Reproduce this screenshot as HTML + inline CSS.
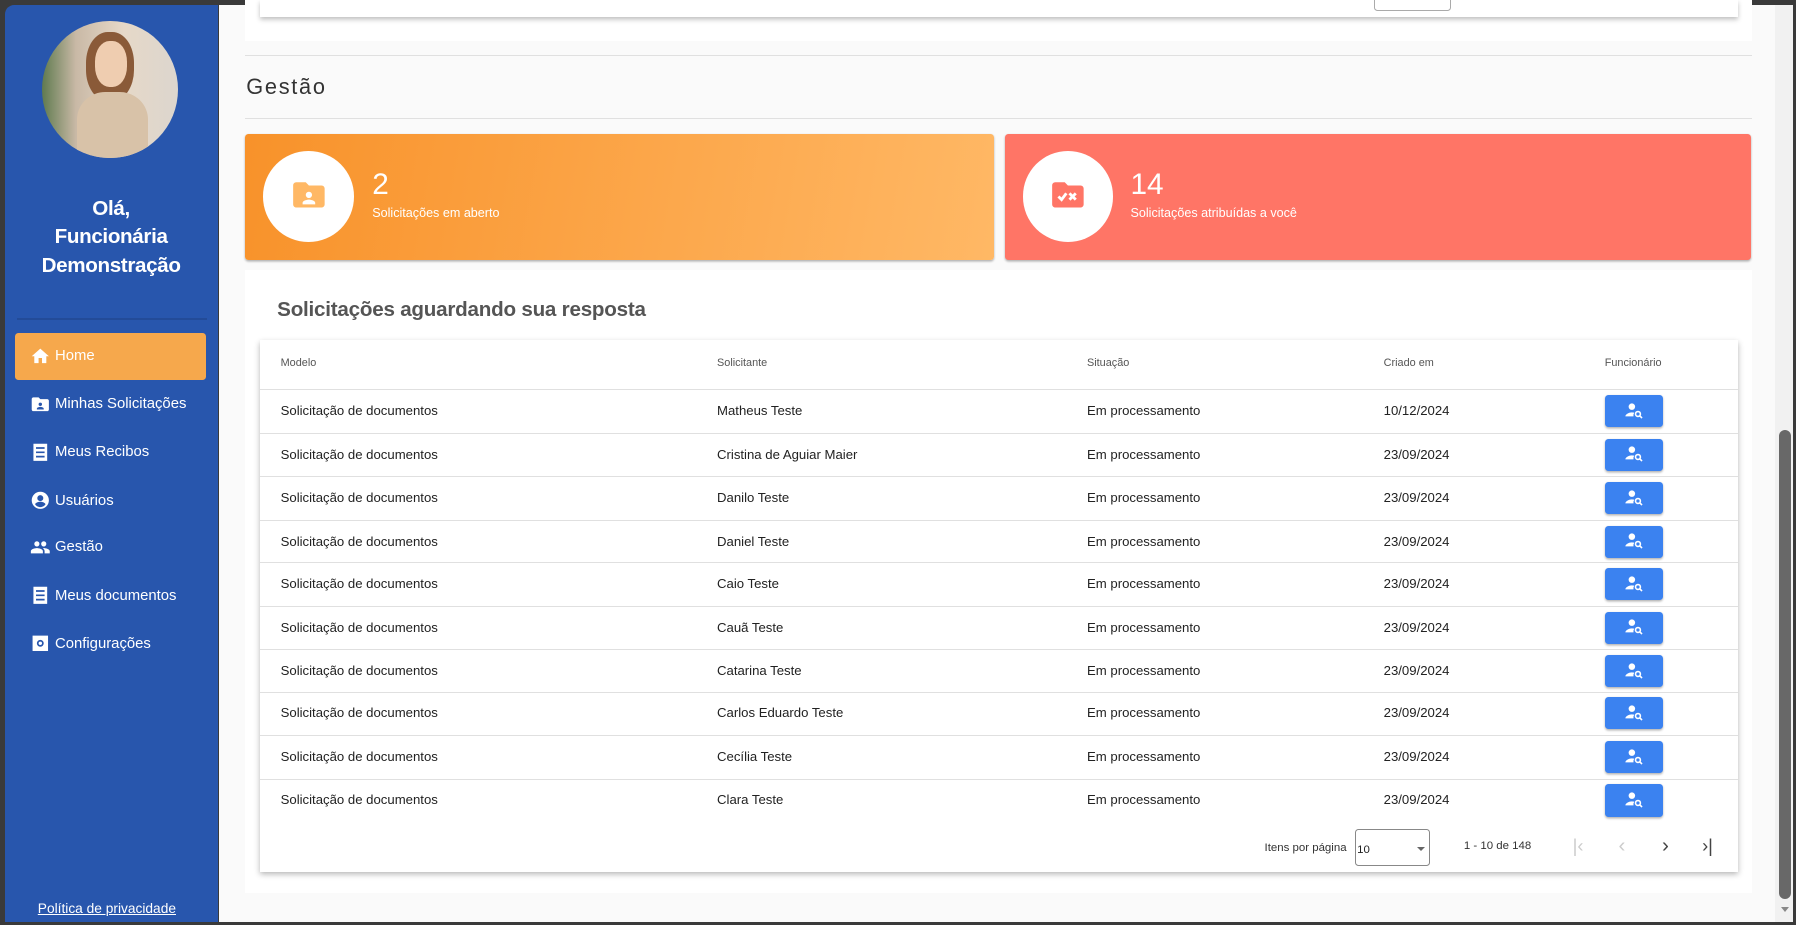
<!DOCTYPE html>
<html><head><meta charset="utf-8"><style>
html,body{margin:0;padding:0}
body{width:1568px;height:808px;zoom:1.14541;background:#3a3a3a;font-family:"Liberation Sans",Arial,sans-serif;position:relative;overflow:hidden}
.abs{position:absolute}
#side{left:4px;top:4px;width:186px;height:801px;background:#2856ad;border-radius:8px 0 0 0}
#main{left:191px;top:4px;width:1359px;height:801px;background:#fafafa}
#sb{left:1550px;top:4px;width:15px;height:801px;background:#f1f1f1}
.menu{position:absolute;left:27px;color:#fff;font-size:13px;display:flex;align-items:center;gap:4px}
.menu svg{width:18px;height:18px}
.hdr{position:absolute;top:312px;font-size:9.5px;color:#555}
.row{position:absolute;left:227px;width:1290px;height:37px;border-top:1px solid #e0e0e0;font-size:11.5px;color:#222}
.row span{position:absolute;top:11px}
.btn{position:absolute;left:1174px;top:4px;width:51px;height:28px;background:#3b82f0;border-radius:3px;box-shadow:0 1px 2px rgba(0,0,0,.3)}
</style></head><body>
<div class="abs" id="side">
  <div class="abs" style="left:33px;top:14px;width:118px;height:120px;border-radius:50%;overflow:hidden;background:linear-gradient(90deg,#5f7a4f 0%,#c9b9a6 25%,#e6d8c8 60%,#dcd6ce 100%)">
    <div class="abs" style="left:38px;top:10px;width:42px;height:60px;border-radius:45%;background:#8a5a38"></div>
    <div class="abs" style="left:46px;top:18px;width:28px;height:40px;border-radius:45%;background:#efcdb0"></div>
    <div class="abs" style="left:30px;top:62px;width:62px;height:60px;border-radius:40% 40% 0 0;background:#d8c2a8"></div>
  </div>
  <div class="abs" style="left:0;width:186px;top:166px;text-align:center;color:#fff;font-weight:bold;font-size:18px;line-height:25px;letter-spacing:-.3px">Olá,<br>Funcionária<br>Demonstração</div>
  <div class="abs" style="left:11px;top:274px;width:166px;height:1px;background:#234b98"></div>
  <div class="abs" style="left:9px;top:287px;width:167px;height:41px;background:#f6a84c;border-radius:3px"></div>
  <div class="menu" style="top:298px;left:22px"><svg viewBox="0 0 24 24"><path fill="#fff" d="M10 20v-6h4v6h5v-8h3L12 3 2 12h3v8z"/></svg>Home</div>
  <div class="menu" style="top:340px;left:22px"><svg viewBox="0 0 24 24"><path fill="#fff" d="M20 6h-8l-2-2H4c-1.1 0-2 .9-2 2v12c0 1.1.9 2 2 2h16c1.1 0 2-.9 2-2V8c0-1.1-.9-2-2-2zm-8 4a2 2 0 110 4 2 2 0 010-4zm4 8H8v-1c0-1.3 2.7-2 4-2s4 .7 4 2z"/></svg>Minhas Solicitações</div>
  <div class="menu" style="top:382px;left:22px"><svg viewBox="0 0 24 24"><path fill="#fff" d="M4 2h16v20H4zM7 6v2h10V6zm0 5v2h10v-2zm0 5v2h10v-2z"/></svg>Meus Recibos</div>
  <div class="menu" style="top:424px;left:22px"><svg viewBox="0 0 24 24"><path fill="#fff" d="M12 2a10 10 0 100 20 10 10 0 000-20zm0 4a3.5 3.5 0 110 7 3.5 3.5 0 010-7zm0 14c-2.5 0-4.7-1.3-6-3.2 0-2 4-3.1 6-3.1s6 1.1 6 3.1c-1.3 1.9-3.5 3.2-6 3.2z"/></svg>Usuários</div>
  <div class="menu" style="top:465px;left:22px"><svg viewBox="0 0 24 24"><path fill="#fff" d="M16 11a3 3 0 100-6 3 3 0 000 6zm-8 0a3 3 0 100-6 3 3 0 000 6zm0 2c-2.3 0-7 1.2-7 3.5V19h14v-2.5C15 14.2 10.3 13 8 13zm8 0c-.3 0-.6 0-1 .1 1.2.8 2 2 2 3.4V19h6v-2.5c0-2.3-4.7-3.5-7-3.5z"/></svg>Gestão</div>
  <div class="menu" style="top:507px;left:22px"><svg viewBox="0 0 24 24"><path fill="#fff" d="M4 2h16v20H4zM7 6v2h10V6zm0 5v2h10v-2zm0 5v2h10v-2z"/></svg>Meus documentos</div>
  <div class="menu" style="top:549px;left:22px"><svg viewBox="0 0 24 24"><path fill="#fff" d="M3 3h18v18H3zm9 5a4 4 0 100 8 4 4 0 000-8zm0 2a2 2 0 110 4 2 2 0 010-4z"/></svg>Configurações</div>
  <div class="abs" style="left:29px;top:783px;color:#fff;font-size:12px;text-decoration:underline">Política de privacidade</div>
</div>
<div class="abs" id="main">
  <div class="abs" style="left:23px;top:-4px;width:1316px;height:36px;background:#fff"></div>
  <div class="abs" style="left:36px;top:-4px;width:1290px;height:15px;background:#fff;box-shadow:0 2px 4px rgba(0,0,0,.25)"></div>
  <div class="abs" style="left:1009px;top:-4px;width:65px;height:9px;border:1px solid #aaa;border-top:0;border-radius:0 0 3px 3px"></div>
  <div class="abs" style="left:23px;top:44px;width:1316px;height:1px;background:#e0e0e0"></div>
  <div class="abs" style="left:24px;top:61px;font-size:19px;color:#333;letter-spacing:1.5px">Gestão</div>
  <div class="abs" style="left:23px;top:99px;width:1316px;height:1px;background:#e0e0e0"></div>
  <div class="abs" style="left:23px;top:113px;width:654px;height:110px;border-radius:3px;background:linear-gradient(100deg,#f8922a,#ffb865);box-shadow:0 1px 2px rgba(0,0,0,.3)">
    <div class="abs" style="left:16px;top:15px;width:79px;height:79px;border-radius:50%;background:#fff"></div>
    <svg class="abs" style="left:39px;top:37px" width="33" height="33" viewBox="0 0 24 24"><path fill="#ffb865" d="M20 6h-8l-2-2H4c-1.1 0-2 .9-2 2v12c0 1.1.9 2 2 2h16c1.1 0 2-.9 2-2V8c0-1.1-.9-2-2-2zm-8 4a2 2 0 110 4 2 2 0 010-4zm4 8H8v-1c0-1.3 2.7-2 4-2s4 .7 4 2z"/></svg>
    <div class="abs" style="left:111px;top:30px;color:#fff;font-size:26px">2</div>
    <div class="abs" style="left:111px;top:63px;color:#fff;font-size:11px">Solicitações em aberto</div>
  </div>
  <div class="abs" style="left:686px;top:113px;width:652px;height:110px;border-radius:3px;background:#ff7566;box-shadow:0 1px 2px rgba(0,0,0,.3)">
    <div class="abs" style="left:16px;top:15px;width:79px;height:79px;border-radius:50%;background:#fff"></div>
    <svg class="abs" style="left:39px;top:37px" width="33" height="33" viewBox="0 0 24 24"><path fill="#ff7566" d="M20 6h-8l-2-2H4c-1.1 0-2 .9-2 2v12c0 1.1.9 2 2 2h16c1.1 0 2-.9 2-2V8c0-1.1-.9-2-2-2z"/><path fill="none" stroke="#fff" stroke-width="1.8" d="M6 13l2 2 3-4M13 11l4 4M17 11l-4 4"/></svg>
    <div class="abs" style="left:110px;top:30px;color:#fff;font-size:26px">14</div>
    <div class="abs" style="left:110px;top:63px;color:#fff;font-size:11px">Solicitações atribuídas a você</div>
  </div>
  <div class="abs" style="left:23px;top:232px;width:1316px;height:544px;background:#fff"></div>
  <div class="abs" style="left:51px;top:256px;font-size:18px;font-weight:bold;color:#555;letter-spacing:-.2px">Solicitações aguardando sua resposta</div>
</div>
<div class="abs" style="left:227px;top:297px;width:1290px;height:464px;background:#fff;box-shadow:0 2px 5px rgba(0,0,0,.3)"></div>
<div class="hdr" style="left:245px">Modelo</div>
<div class="hdr" style="left:626px">Solicitante</div>
<div class="hdr" style="left:949px">Situação</div>
<div class="hdr" style="left:1208px">Criado em</div>
<div class="hdr" style="left:1401px">Funcionário</div>
<div id="rows"></div>
<div class="abs" style="left:1104px;top:735px;font-size:10px;color:#333">Itens por página</div>
<div class="abs" style="left:1183px;top:724px;width:64px;height:30px;border:1px solid #888;border-radius:3px;font-size:10px;color:#222"><span style="position:absolute;left:1px;top:12px">10</span><span style="position:absolute;right:4px;top:15px;border:4px solid transparent;border-top:4px solid #666"></span></div>
<div class="abs" style="left:1278px;top:733px;font-size:10px;color:#333">1 - 10 de 148</div>
<div class="abs" style="left:1373px;top:729px;font-size:16px;color:#ccc">|‹</div>
<div class="abs" style="left:1413px;top:728px;font-size:18px;color:#ccc">‹</div>
<div class="abs" style="left:1451px;top:728px;font-size:18px;color:#444">›</div>
<div class="abs" style="left:1486px;top:729px;font-size:16px;color:#444">›|</div>
<div class="abs" id="sb"></div>
<div class="abs" style="left:1553px;top:375px;width:11px;height:410px;background:#686868;border-radius:6px"></div>
<div class="abs" style="left:1555px;top:792px;border:4px solid transparent;border-top:5px solid #888"></div>
<script>
var names=["Matheus Teste","Cristina de Aguiar Maier","Danilo Teste","Daniel Teste","Caio Teste","Cauã Teste","Catarina Teste","Carlos Eduardo Teste","Cecília Teste","Clara Teste"];
var tops=[340,378,416,454,491,529,567,604,642,680];
var h="";
var ic='<svg style="position:absolute;left:17px;top:5px" width="18" height="17" viewBox="0 0 24 24"><circle cx="9" cy="7" r="4" fill="#fff"/><path fill="#fff" d="M1 19c0-3 5-5 8-5 1 0 2 .1 3 .4A6 6 0 0011 19z"/><circle cx="16.5" cy="16" r="3" fill="none" stroke="#fff" stroke-width="2"/><path stroke="#fff" stroke-width="2" d="M18.5 18l3 3"/></svg>';
for(var i=0;i<10;i++){h+='<div class="row" style="top:'+tops[i]+'px"><span style="left:18px">Solicitação de documentos</span><span style="left:399px">'+names[i]+'</span><span style="left:722px">Em processamento</span><span style="left:981px">'+(i?'23/09/2024':'10/12/2024')+'</span><div class="btn">'+ic+'</div></div>';}
document.getElementById('rows').innerHTML=h;
</script>
</body></html>
